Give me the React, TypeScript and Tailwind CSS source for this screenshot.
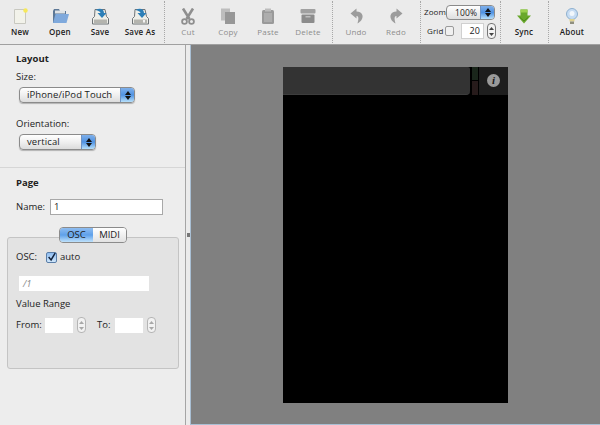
import type { ReactNode } from "react";

function Arrows() {
  return (
    <div className="flex h-full w-[14px] flex-col items-center justify-center gap-[1px] border-l border-[#6f93c4] bg-gradient-to-b from-[#7fb0ea] via-[#4f92e2] to-[#b7e0fa]">
      <svg width="6" height="4" viewBox="0 0 6 4"><path d="M3 0 6 4H0z" fill="#111" /></svg>
      <svg width="6" height="4" viewBox="0 0 6 4"><path d="M0 0h6L3 4z" fill="#111" /></svg>
    </div>
  );
}

function AquaSelect({ label, width }: { label: string; width: string }) {
  return (
    <div className={`flex h-[16px] overflow-hidden rounded-[4px] border border-[#8b8b8b] bg-gradient-to-b from-[#ffffff] via-[#f0f0f0] to-[#dcdcdc] shadow-[0_1px_1px_rgba(0,0,0,0.25)] ${width}`}>
      <div className="flex-1 whitespace-nowrap pl-[7px] text-[9.5px] leading-[14px] tracking-[0.1px] text-[#1c1c1c]">{label}</div>
      <Arrows />
    </div>
  );
}

function Stepper({ dim = false }: { dim?: boolean }) {
  const c = dim ? "#a8a8a8" : "#444";
  return (
    <div className={`flex h-[16px] w-[9px] flex-col items-center justify-center gap-[3px] rounded-[4px] border bg-[#f2f2f2] ${dim ? "border-[#b5b5b5]" : "border-[#777]"}`}>
      <svg width="5" height="3" viewBox="0 0 5 3"><path d="M2.500 0 5 3H0z" fill={c} /></svg>
      <svg width="5" height="3" viewBox="0 0 5 3"><path d="M0 0h5L2.500 3z" fill={c} /></svg>
    </div>
  );
}

function ToolItem({ label, icon, dim = false }: { label: string; icon: ReactNode; dim?: boolean }) {
  return (
    <div className="flex w-10 flex-col items-center pt-[6px]">
      <div className="flex h-[18px] w-full items-center justify-center">{icon}</div>
      <div className={`mt-[1px] whitespace-nowrap text-[8px] leading-[12px] tracking-[0.2px] ${dim ? "text-[#8d8d8d]" : "font-semibold text-[#1b1b1b]"}`}>{label}</div>
    </div>
  );
}

function Sep() {
  return <div className="ml-[4px] mr-[3px] h-[42px] w-0 border-l border-dotted border-[#a8a8a8]" />;
}

const NewIcon = (
  <svg width="15" height="16" viewBox="0 0 15 16">
    <path d="M1.500 1.500h11v14h-11z" fill="#f2f2ea" stroke="#c8c8c0" />
    <circle cx="12.500" cy="2.500" r="2.200" fill="#f6e85a" />
  </svg>
);
const OpenIcon = (
  <svg width="17" height="16" viewBox="0 0 17 16">
    <path d="M1 3l1-2h5l1 2h6v12H1z" fill="#5d7896" />
    <path d="M3 2.500h10v3H3z" fill="#dfe3e6" />
    <path d="M3.500 6H17l-2.500 9H1z" fill="#7fa9dc" />
  </svg>
);
function DiskIcon({ extra = false }: { extra?: boolean }) {
  return (
    <svg width="17" height="17" viewBox="0 0 17 17">
      <path d="M3 1.500h10l1.500 7 2 2v5.500H0.500v-5.500l2-2z" fill="#eeeee8" stroke="#6f7477" />
      <path d="M2 11.500h13v3.500H2z" fill="#b4b4ae" />
      {extra && <path d="M11 12h2v2.500h-2z" fill="#f4f4f4" />}
      <path d="M3.500 2C8-0.500 12 1 12 5h2.500L10 10 5.500 5H8.500C8.500 3.500 6 2.500 3.500 2z" fill="#2c7fb8" />
    </svg>
  );
}
const CutIcon = (
  <svg width="14" height="17" viewBox="0 0 14 17">
    <path d="M2 0.500 8.500 11M12 0.500 5.500 11" stroke="#8f8f8f" strokeWidth="2.600" fill="none" />
    <circle cx="3.500" cy="13.500" r="2.400" fill="none" stroke="#8f8f8f" strokeWidth="1.800" />
    <circle cx="10.500" cy="13.500" r="2.400" fill="none" stroke="#8f8f8f" strokeWidth="1.800" />
  </svg>
);
const CopyIcon = (
  <svg width="16" height="16" viewBox="0 0 16 16">
    <path d="M1 0.500h9v12H1z" fill="#bdbdbd" />
    <path d="M5 4h10v12H5z" fill="#979797" />
  </svg>
);
const PasteIcon = (
  <svg width="14" height="16" viewBox="0 0 14 16">
    <rect x="1" y="2" width="12" height="14" rx="1.500" fill="#9a9a9a" />
    <path d="M4 0.500h6v3H4z" fill="#bcbcbc" />
    <path d="M3 5h8v9H3z" fill="#adadad" />
  </svg>
);
const DeleteIcon = (
  <svg width="16" height="16" viewBox="0 0 16 16">
    <rect x="0.500" y="1" width="15" height="4.500" rx="1" fill="#a0a0a0" />
    <rect x="1.500" y="6.500" width="13" height="8.500" rx="1" fill="#8c8c8c" />
    <path d="M5.500 8h5v1.500h-5z" fill="#bdbdbd" />
  </svg>
);
const UndoIcon = (
  <svg width="13" height="16" viewBox="0 0 13 16">
    <path d="M6.500 0.500 0.500 5.500 6.500 10.500V8C8.500 8 9 10 7.500 15.500 11 13.500 13 10.500 12.500 7.500 12 5 9.500 3.500 6.500 3.500z" fill="#9c9c9c" />
  </svg>
);
const RedoIcon = (
  <svg width="13" height="16" viewBox="0 0 13 16">
    <path d="M6.500 0.500 12.500 5.500 6.500 10.500V8C4.500 8 4 10 5.500 15.500 2 13.500 0 10.500 0.500 7.500 1 5 3.500 3.500 6.500 3.500z" fill="#9c9c9c" />
  </svg>
);
const SyncIcon = (
  <svg width="14" height="15" viewBox="0 0 14 15">
    <path d="M3.500 0.500h7v6H14L7 14.500 0 6.500h3.500z" fill="#69a82c" />
    <path d="M3.500 0.500h7v3h-7z" fill="#9bd04f" />
    <path d="M3 8.500 7 12l4-3.500" fill="none" stroke="#4c8a1a" />
  </svg>
);
const AboutIcon = (
  <svg width="14" height="17" viewBox="0 0 14 17">
    <circle cx="7" cy="6" r="5.500" fill="#c6dcf3" stroke="#8eb0cf" />
    <circle cx="7" cy="5.500" r="2.500" fill="#f2f7fc" />
    <path d="M4.500 11h5v2.500h-5z" fill="#e0d28e" />
    <path d="M5 13.500h4V16H5z" fill="#8f8f80" />
  </svg>
);

function Toolbar() {
  return (
    <div className="flex h-[44px] shrink-0 items-start bg-[#ebebeb] pt-[1px]">
      <ToolItem label="New" icon={NewIcon} />
      <ToolItem label="Open" icon={OpenIcon} />
      <ToolItem label="Save" icon={<DiskIcon />} />
      <ToolItem label="Save As" icon={<DiskIcon extra />} />
      <Sep />
      <ToolItem dim label="Cut" icon={CutIcon} />
      <ToolItem dim label="Copy" icon={CopyIcon} />
      <ToolItem dim label="Paste" icon={PasteIcon} />
      <ToolItem dim label="Delete" icon={DeleteIcon} />
      <Sep />
      <ToolItem dim label="Undo" icon={UndoIcon} />
      <ToolItem dim label="Redo" icon={RedoIcon} />
      <Sep />
      <div className="flex w-[72px] flex-col pt-[4px] text-[8px] tracking-[0.1px] text-[#222]">
        <div className="flex h-[14px] items-center">
          <span className="w-[22px]">Zoom</span>
          <div className="flex h-[15px] w-[49px] overflow-hidden rounded-[4px] border border-[#8b8b8b] bg-gradient-to-b from-white to-[#dedede]">
            <div className="flex-1 pl-[8px] text-[8.5px] leading-[13px]">100%</div>
            <Arrows />
          </div>
        </div>
        <div className="mt-[4px] flex h-[16px] items-center">
          <span className="w-[21px] pl-[3px]">Grid</span>
          <div className="h-[10px] w-[10px] rounded-[2px] border border-[#9a9a9a] bg-[#f0f0f0]" />
          <div className="ml-[7px] h-[16px] w-[23px] border border-[#d0d0d0] bg-white pr-[3px] text-right text-[9px] leading-[14px]">20</div>
          <div className="ml-[3px]"><Stepper /></div>
        </div>
      </div>
      <Sep />
      <ToolItem label="Sync" icon={SyncIcon} />
      <Sep />
      <ToolItem label="About" icon={AboutIcon} />
    </div>
  );
}

function LeftPanel() {
  return (
    <div className="flex h-full w-[186px] shrink-0 flex-col border-r border-[#a5a5a5] bg-[#ededed] text-[9.5px] text-[#222]">
      <div className="pl-[16px] pt-[7px]">
        <div className="font-bold leading-[13px]">Layout</div>
        <div className="mt-[5px] leading-[13px]">Size:</div>
        <div className="ml-[3px] mt-[4px]"><AquaSelect label="iPhone/iPod Touch" width="w-[116px]" /></div>
        <div className="mt-[14px] leading-[13px]">Orientation:</div>
        <div className="ml-[3px] mt-[4px]"><AquaSelect label="vertical" width="w-[77px]" /></div>
      </div>
      <div className="mt-[17px] border-t border-[#d6d6d6] pl-[16px] pt-[8px]">
        <div className="font-bold leading-[13px]">Page</div>
        <div className="mt-[10px] flex h-[16px] items-center">
          <span className="w-[34px]">Name:</span>
          <div className="h-[16px] w-[113px] border border-[#a8a8a8] bg-white pl-[3px] leading-[14px]">1</div>
        </div>
      </div>
      <div className="ml-[7px] mt-[22px] h-[132px] w-[172px] rounded-[3px] border border-[#c4c4c4] bg-[#e3e3e3] px-[8px]">
        <div className="-mt-[11px] flex justify-center">
          <div className="flex h-[16px] w-[68px] overflow-hidden rounded-[4px] border border-[#8b8b8b] leading-[14px]">
            <div className="w-[33px] bg-gradient-to-b from-[#8fbdf0] via-[#5ea0ea] to-[#bfe2fb] text-center">OSC</div>
            <div className="flex-1 bg-gradient-to-b from-white to-[#e2e2e2] text-center">MIDI</div>
          </div>
        </div>
        <div className="mt-[7px] flex h-[14px] items-center">
          <span className="w-[30px]">OSC:</span>
          <div className="flex h-[11px] w-[11px] items-center justify-center rounded-[2px] border border-[#5a7ea8] bg-gradient-to-b from-[#8ebcf0] to-[#cfe6fa]">
            <svg width="11" height="11" viewBox="0 0 11 11"><path d="M2 5l3 3.500L10 0" fill="none" stroke="#10203a" strokeWidth="1.800" /></svg>
          </div>
          <span className="ml-[3px]">auto</span>
        </div>
        <div className="ml-[3px] mt-[12px] h-[15px] w-[130px] bg-white pl-[4px] italic leading-[15px] text-[#8c8c8c]">/1</div>
        <div className="mt-[6px] leading-[13px]">Value Range</div>
        <div className="mt-[7px] flex h-[16px] items-center">
          <span className="w-[29px]">From:</span>
          <div className="h-[15px] w-[28px] bg-white" />
          <div className="ml-[4px]"><Stepper dim /></div>
          <span className="ml-[11px] w-[18px]">To:</span>
          <div className="h-[15px] w-[28px] bg-white" />
          <div className="ml-[4px]"><Stepper dim /></div>
        </div>
      </div>
    </div>
  );
}

function Phone() {
  return (
    <div className="h-[336px] w-[225px] bg-black">
      <div className="flex h-[28px]">
        <div className="h-full w-[187px] rounded-br-[4px] rounded-tr-[2px] border-b border-[#3d3d3d] bg-[#333333]" />
        <div className="ml-[2px] flex h-full w-[6px] flex-col">
          <div className="h-[13px] bg-[#1a261b]" />
          <div className="mt-[1px] h-[14px] bg-[#271b1b]" />
        </div>
        <div className="ml-[1px] flex flex-1 items-center justify-center bg-[#1e1e1e]">
          <div className="flex h-[13px] w-[13px] items-center justify-center rounded-full bg-[#9a9a9a] font-['Liberation_Serif',serif] text-[11px] font-bold italic leading-none text-[#1a1a1a]">i</div>
        </div>
      </div>
    </div>
  );
}

export default function App() {
  return (
    <div className="flex h-[425px] w-[600px] flex-col overflow-hidden bg-[#ebebeb] font-['Open_Sans',sans-serif]">
      <Toolbar />
      <div className="flex min-h-0 flex-1 border-t border-[#a0a0a0]">
        <LeftPanel />
        <div className="flex w-[4px] shrink-0 items-center justify-center bg-[#ebebeb]">
          <div className="h-[4px] w-[3px] bg-[#777]" />
        </div>
        <div className="flex flex-1 items-center justify-center border-b border-l border-[#a9bfd4] bg-[#808080]">
          <Phone />
        </div>
      </div>
    </div>
  );
}
